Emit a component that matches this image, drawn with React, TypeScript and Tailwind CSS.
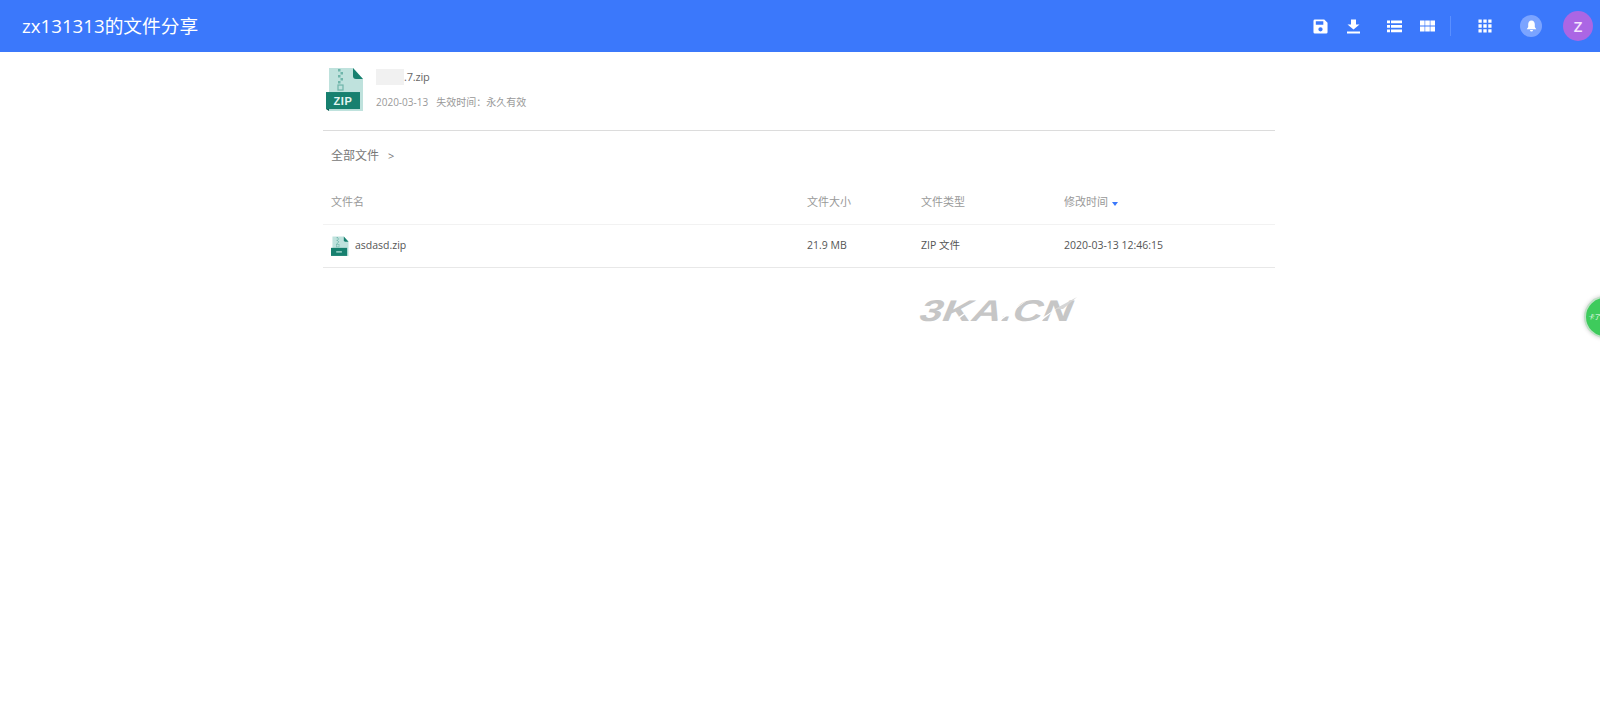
import React from "react";

const CJK = "font-['Open_Sans','Noto_Sans_CJK_SC',sans-serif]";

function ZipIcon({ size, label = true }: { size: number; label?: boolean }) {
  return (
    <svg width={size} height={size * 1.16} viewBox="0 0 38 44" className="block">
      <path d="M3 1H27L37 12V44H3Z" fill="#bfe2dd" />
      <path d="M27 1L37 12H30Q27 12 27 9Z" fill="#17806f" />
      <path d="M12 2h2.5v2.5h-2.5zM14.5 5h2.5v2.5h-2.5zM12 8h2.5v2.5h-2.5zM14.5 11h2.5v2.5h-2.5zM12 14h2.5v2.5h-2.5z" fill="#6fb5aa" />
      <rect x="12" y="18" width="5" height="5" fill="none" stroke="#6fb5aa" strokeWidth="1.2" />
      <rect x="0" y="25" width="34" height="17" fill="#17806f" />
      <path d="M0 42H3V44Z" fill="#0a5a50" />
      {label ? (
        <text x="17" y="38" textAnchor="middle" fontSize="11" fontWeight="700" letterSpacing="0.6" fill="#e4f5f2" fontFamily="'Liberation Sans',sans-serif">ZIP</text>
      ) : (
        <rect x="11" y="32" width="12" height="3" fill="#9fd6cc" />
      )}
    </svg>
  );
}

function HeaderIcons() {
  return (
    <div className="flex items-center h-full">
      <svg width="15" height="15" viewBox="0 0 16 16">
        <path fillRule="evenodd" d="M2 0.5H12L15.5 4V14A1.5 1.5 0 0 1 14 15.5H2A1.5 1.5 0 0 1 0.5 14V2A1.5 1.5 0 0 1 2 0.5ZM3 2.5V6H11V2.5ZM8 8.7A2.3 2.3 0 1 0 8 13.3A2.3 2.3 0 1 0 8 8.7Z" fill="#fff" />
      </svg>
      <svg width="13" height="15" viewBox="0 0 13 15" className="ml-[19px]">
        <path d="M4 0.5H9V5.5H12.5L6.5 10.5L0.5 5.5H4ZM0 12.5H13V14.5H0Z" fill="#fff" />
      </svg>
      <svg width="15" height="13" viewBox="0 0 15 13" className="ml-[27px]">
        <path d="M0 0.5H3V3.3H0ZM4 0.5H15V3.3H4ZM0 5H3V7.8H0ZM4 5H15V7.8H4ZM0 9.5H3V12.3H0ZM4 9.5H15V12.3H4Z" fill="#fff" />
      </svg>
      <svg width="15" height="12" viewBox="0 0 15 12" className="ml-[18px]">
        <path d="M0 0.5H4.6V5.5H0ZM5.2 0.5H9.8V5.5H5.2ZM10.4 0.5H15V5.5H10.4ZM0 6.5H4.6V11.5H0ZM5.2 6.5H9.8V11.5H5.2ZM10.4 6.5H15V11.5H10.4Z" fill="#fff" />
      </svg>
      <div className="ml-[15px] h-5 w-px bg-[#5a8fff]" />
      <svg width="14" height="14" viewBox="0 0 15 15" className="ml-[27px]">
        <path d="M0.5 0.5H4V4H0.5ZM5.7 0.5H9.3V4H5.7ZM11 0.5H14.5V4H11ZM0.5 5.7H4V9.3H0.5ZM5.7 5.7H9.3V9.3H5.7ZM11 5.7H14.5V9.3H11ZM0.5 11H4V14.5H0.5ZM5.7 11H9.3V14.5H5.7ZM11 11H14.5V14.5H11Z" fill="#fff" />
      </svg>
      <div className="ml-[28px] flex h-[22px] w-[22px] items-center justify-center rounded-full bg-[#7ba4ff]">
        <svg width="11" height="12" viewBox="0 0 11 12">
          <path d="M5.5 0.5C7.8 0.5 8.8 2.3 8.8 4.5V7L10.3 9.3H0.7L2.2 7V4.5C2.2 2.3 3.2 0.5 5.5 0.5ZM4 10H7A1.5 1.5 0 0 1 4 10Z" fill="#fff" />
        </svg>
      </div>
      <div className="ml-[21px] flex h-[30px] w-[30px] items-center justify-center rounded-full bg-[#ab66e4] text-[15px] font-semibold text-[#f5e6ff]">Z</div>
    </div>
  );
}

function Watermark() {
  return (
    <svg width="172" height="36" viewBox="0 0 172 36" className="absolute left-[909px] top-[291px]">
      <g transform="translate(8,30) skewX(-22) scale(1.36,1)">
        <text x="0" y="0" fontSize="30" fontWeight="700" fill="#c6c6c6" fontFamily="'Liberation Sans',sans-serif">3KA.CN</text>
      </g>
      <path d="M44 30L74 9L72 11L47 30ZM88 30L118 9L116 11L91 30ZM128 30L166 6L146 19L132 30Z" fill="#ffffff" />
      <path d="M146 18L168 6L154 18Z" fill="#d6d6d6" />
    </svg>
  );
}

export default function App() {
  return (
    <div className={`relative h-[721px] w-full overflow-hidden bg-white ${CJK}`}>
      <header className="flex h-[52px] items-center justify-between bg-[#3b78fb] pl-[22px] pr-[7px]">
        <div className="text-[18.7px] text-white">zx131313的文件分享</div>
        <HeaderIcons />
      </header>

      <main className="ml-[323px] w-[952px]">
        <section className="flex h-[79px] items-start border-b border-[#dcdcdc] pl-[3px] pt-[15px]">
          <ZipIcon size={38} />
          <div className="ml-[12px]">
            <div className="mt-[1px] flex h-[18px] items-center text-[11px] tracking-[-0.2px] text-[#666]">
              <span className="h-4 w-[28px] bg-[#f1f1f1]" />
              <span>.7.zip</span>
            </div>
            <div className="mt-[7px] text-[10px] leading-[18px] text-[#999]">
              <span>2020-03-13</span>
              <span className="ml-2">失效时间：永久有效</span>
            </div>
          </div>
        </section>

        <div className="flex h-[50px] items-center pl-2 text-[12px] text-[#777]">
          <span>全部文件</span>
          <span className="ml-[9px] text-[11px]">&gt;</span>
        </div>

        <div className="grid h-[44px] grid-cols-[476px_114px_143px_1fr] items-center border-b border-[#f2f2f2] pl-2 text-[11px] text-[#999]">
          <span>文件名</span>
          <span>文件大小</span>
          <span>文件类型</span>
          <span className="flex items-center">
            修改时间
            <span className="ml-1 mt-[2px] h-0 w-0 border-x-[3.5px] border-t-[4px] border-x-transparent border-t-[#3b78fb]" />
          </span>
        </div>

        <div className="grid h-[43px] grid-cols-[476px_114px_143px_1fr] items-center border-b border-[#e8e8e8] pl-2 text-[10.5px] text-[#555]">
          <span className="flex items-center">
            <ZipIcon size={18} label={false} />
            <span className="ml-[6px]">asdasd.zip</span>
          </span>
          <span>21.9 MB</span>
          <span>ZIP 文件</span>
          <span>2020-03-13 12:46:15</span>
        </div>
      </main>

      <Watermark />

      <div className="absolute left-[1584px] top-[296px] flex h-[42px] w-[42px] items-center rounded-full border-2 border-[#bfe0c6] bg-[#3ecb5c] pl-[2px] text-[6px] italic text-white shadow-[0_0_4px_#cccccc]">
        卡了
      </div>
    </div>
  );
}
